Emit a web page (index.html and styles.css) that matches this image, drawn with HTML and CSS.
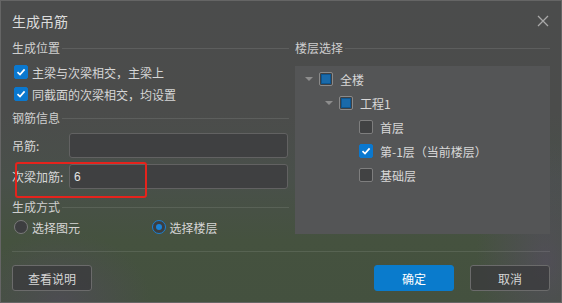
FILE: index.html
```html
<!DOCTYPE html>
<html lang="zh">
<head>
<meta charset="utf-8">
<title>生成吊筋</title>
<link rel="stylesheet" href="styles.css">
</head>
<body>
<div class="dialog">
  <div class="titlebar">
    <span class="title">生成吊筋</span>
    <svg class="close" width="12" height="12" viewBox="0 0 12 12"><path d="M1 1 L11 11 M11 1 L1 11" stroke="#a9a9a9" stroke-width="1.3" fill="none"/></svg>
  </div>
  <div class="body">
    <div class="left">
      <div class="section"><span>生成位置</span><i class="rule"></i></div>
      <div class="check-row first"><span class="cb checked"><svg width="10" height="10" viewBox="0 0 10 10"><path d="M1.5 5.2 L4 7.6 L8.6 2.4" stroke="#fff" stroke-width="1.7" fill="none"/></svg></span><span>主梁与次梁相交，主梁上</span></div>
      <div class="check-row"><span class="cb checked"><svg width="10" height="10" viewBox="0 0 10 10"><path d="M1.5 5.2 L4 7.6 L8.6 2.4" stroke="#fff" stroke-width="1.7" fill="none"/></svg></span><span>同截面的次梁相交，均设置</span></div>
      <div class="section sec2"><span>钢筋信息</span><i class="rule"></i></div>
      <div class="field f1"><label>吊筋:</label><div class="input"></div></div>
      <div class="field f2"><label>次梁加筋:</label><div class="input">6</div><div class="annot"></div></div>
      <div class="section sec3"><span>生成方式</span><i class="rule"></i></div>
      <div class="radios">
        <div class="radio-item"><span class="radio"></span><span>选择图元</span></div>
        <div class="radio-item on"><span class="radio"><i></i></span><span>选择楼层</span></div>
      </div>
    </div>
    <div class="right">
      <div class="section"><span>楼层选择</span><i class="rule"></i></div>
      <div class="tree">
        <div class="node l0"><span class="tog"><i></i></span><span class="cb part"><i></i></span><span>全楼</span></div>
        <div class="node l1"><span class="tog"><i></i></span><span class="cb part"><i></i></span><span>工程1</span></div>
        <div class="node l2"><span class="tog"></span><span class="cb"></span><span>首层</span></div>
        <div class="node l2"><span class="tog"></span><span class="cb checked"><svg width="10" height="10" viewBox="0 0 10 10"><path d="M1.5 5.2 L4 7.6 L8.6 2.4" stroke="#fff" stroke-width="1.7" fill="none"/></svg></span><span>第-1层（当前楼层）</span></div>
        <div class="node l2"><span class="tog"></span><span class="cb"></span><span>基础层</span></div>
      </div>
    </div>
  </div>
  <div class="divider"></div>
  <div class="footer">
    <button class="btn">查看说明</button>
    <div class="spacer"></div>
    <button class="btn primary">确定</button>
    <button class="btn">取消</button>
  </div>
</div>
</body>
</html>
```

FILE: styles.css
```css
* { box-sizing: border-box; }
html, body { margin: 0; padding: 0; background: #3c4a3e; }
body { font-family: "Noto Sans CJK SC", "Noto Sans", sans-serif; font-size: 12px; color: #d6d6d6; }

.dialog {
  width: 562px;
  height: 303px;
  border: 1px solid #656565;
  background:
    radial-gradient(ellipse 90px 70px at 60px 300px, rgba(90,70,110,0.4), rgba(90,70,110,0) 100%),
    radial-gradient(ellipse 70px 120px at 545px 260px, rgba(95,75,115,0.45), rgba(95,75,115,0) 100%),
    linear-gradient(to bottom, #4b4c4c 0px, #4b4c4b 110px, #49504a 180px, #45523f 240px, #44513f 303px);
  display: flex;
  flex-direction: column;
  overflow: hidden;
}

.titlebar {
  height: 39px;
  display: flex;
  align-items: center;
  justify-content: space-between;
  padding: 0 12px 0 11px;
}
.title { font-size: 14px; color: #dcdcdc; line-height: 20px; }

.body { display: flex; padding-left: 11px; height: 196px; }
.left { width: 277px; display: flex; flex-direction: column; position: relative; }
.right { width: 255px; margin-left: 6px; display: flex; flex-direction: column; }

.section { display: flex; align-items: center; height: 16px; line-height: 16px; color: #cfcfcf; }
.section .rule { flex: 1; height: 1px; background: rgba(255,255,255,0.1); margin-left: 2px; }
.sec2 { margin-top: 5px; }
.sec3 { margin-top: 10px; }

.check-row { display: flex; align-items: center; height: 22px; gap: 4px; padding-left: 2px; }
.check-row.first { margin-top: 5px; }

.cb {
  width: 14px; height: 14px; border-radius: 2px;
  border: 1px solid #7e7e7e; background: #414243;
  display: inline-flex; align-items: center; justify-content: center;
  flex: none;
}
.cb.checked { background: #0a78cf; border-color: #0a78cf; }
.cb.part { border-color: #8a8a8a; background: #3f4144; }
.cb.part i { width: 10px; height: 10px; background: #1a6aaa; border: 1px solid #0d5690; display: block; }

.field { display: flex; align-items: center; height: 25px; position: relative; }
.f1 { margin-top: 7px; }
.f2 { margin-top: 6px; }
.field label { width: 57px; flex: none; color: #d6d6d6; }
.input {
  flex: 1; height: 100%; margin-right: 1px;
  background: #3f4041; border: 1px solid #626262; border-radius: 3px;
  padding-left: 4px; display: flex; align-items: center; color: #e4e4e4;
  font-family: "Liberation Sans", "Noto Sans", sans-serif; font-size: 12px;
}
.annot {
  position: absolute; left: 3px; top: -2px; width: 132px; height: 36px;
  border: 2px solid #e5231c; border-radius: 3px;
}

.radios { display: flex; height: 18px; margin-top: 3px; align-items: center; padding-left: 2px; }
.radio-item { display: flex; align-items: center; gap: 4px; width: 141px; }
.radio {
  width: 14px; height: 14px; border-radius: 50%;
  border: 1px solid #7a7a7a; background: #3d3e40;
  display: inline-flex; align-items: center; justify-content: center; flex: none;
}
.radio-item.on .radio { border-color: #1a82d6; }
.radio i { width: 6px; height: 6px; border-radius: 50%; background: #1a82d6; display: block; }

.tree {
  margin-top: 10px; height: 168px; background: #545556;
  padding-top: 1px;
}
.node { display: flex; align-items: center; height: 24px; color: #d8d8d8; }
.node .cb { margin-right: 7px; }
.node.l0 { padding-left: 10px; }
.node.l1 { padding-left: 30px; }
.node.l2 { padding-left: 50px; }
.tog { width: 14px; flex: none; display: flex; align-items: center; }
.tog i {
  width: 0; height: 0; display: block;
  border-left: 4px solid transparent; border-right: 4px solid transparent;
  border-top: 4px solid #8d8d8d;
}

.divider { height: 1px; background: rgba(255,255,255,0.1); margin: 15px 11px 0 11px; }

.footer { display: flex; align-items: center; padding: 13px 11px 0 11px; gap: 16px; }
.spacer { flex: 1; }
.btn {
  width: 80px; height: 26px; border-radius: 3px;
  border: 1px solid #6b6b6b; background: rgba(58,58,60,0.75);
  color: #d6d6d6; font-family: inherit; font-size: 12px; padding: 0;
}
.btn.primary { background: #0a7bcc; border-color: #0a7bcc; color: #fff; }
```
